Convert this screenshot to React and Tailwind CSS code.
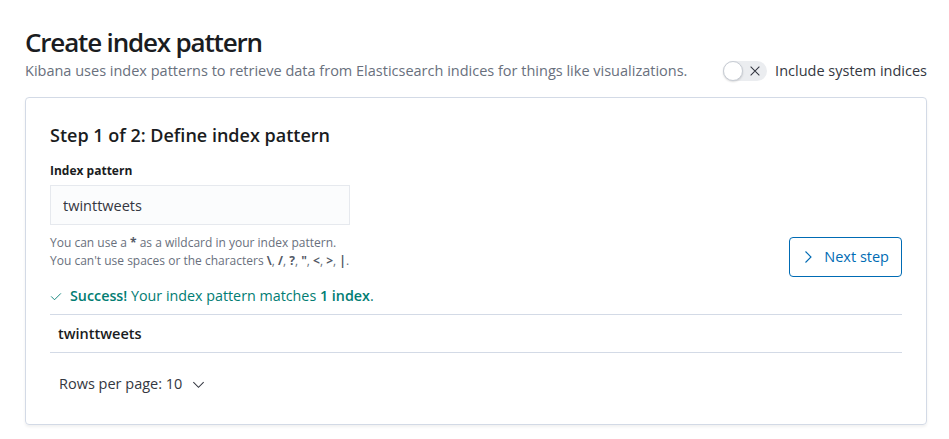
import React, { useState } from "react";

const font = { fontFamily: '"Open Sans", "Noto Sans", sans-serif' };

function ChevronRight({ className }) {
    return (
        <svg viewBox="0 0 16 16" className={className} fill="none" stroke="currentColor" strokeWidth="1.1">
            <path d="M5.5 2.5 L11 8 L5.5 13.5" />
        </svg>
    );
}

function ChevronDown({ className }) {
    return (
        <svg viewBox="0 0 16 16" className={className} fill="none" stroke="currentColor" strokeWidth="1.1">
            <path d="M2.5 5.5 L8 11 L13.5 5.5" />
        </svg>
    );
}

function Check({ className }) {
    return (
        <svg viewBox="0 0 16 16" className={className} fill="none" stroke="currentColor" strokeWidth="1.2">
            <path d="M1.5 8.5 L6 13 L14.5 4.5" />
        </svg>
    );
}

function Toggle({ on, onChange }) {
    return (
        <button
            onClick={() => onChange(!on)}
            className="relative w-[44px] h-[20px] rounded-full bg-[#ebedf0] flex items-center"
        >
            <span className="absolute left-0 top-0 w-[20px] h-[20px] rounded-full bg-white border border-[#c7ccd4] shadow-[0_1px_2px_rgba(0,0,0,0.15)]" />
            <svg viewBox="0 0 16 16" className="absolute left-[25px] top-[3px] w-[14px] h-[14px] text-[#343741]" fill="none" stroke="currentColor" strokeWidth="1.2">
                <path d="M3 3 L13 13 M13 3 L3 13" />
            </svg>
        </button>
    );
}

export default function App() {
    const [pattern, setPattern] = useState("twinttweets");
    const [system, setSystem] = useState(false);

    return (
        <div className="min-h-screen bg-white pl-[25px] pr-[22px] pt-[24px] text-[#343741]" style={font}>
            {/* Header */}
            <div className="flex justify-between items-end">
                <div>
                    <h1 className="text-[26px] leading-[36px] font-semibold tracking-[-0.045em] text-[#1a1c21]">Create index pattern</h1>
                    <p className="text-[14.5px] leading-[21px] text-[#69707d]">
                        Kibana uses index patterns to retrieve data from Elasticsearch indices for things like visualizations.
                    </p>
                </div>
                <div className="flex items-center gap-2 h-[21px]">
                    <Toggle on={system} onChange={setSystem} />
                    <span className="text-[14.5px] leading-[21px] text-[#343741]">Include system indices</span>
                </div>
            </div>

            {/* Panel */}
            <div className="mt-4 border border-[#d3dae6] rounded-[4px] shadow-[0_2px_3px_rgba(0,0,0,0.06)] px-6 pt-[25px] pb-6">
                <div className="flex justify-between items-start">
                    <div>
                        <h2 className="text-[18px] leading-[24px] font-semibold text-[#1a1c21]">Step 1 of 2: Define index pattern</h2>
                        <label className="block mt-4 text-xs leading-4 font-bold text-[#1a1c21]">Index pattern</label>
                        <input
                            value={pattern}
                            onChange={(e) => setPattern(e.target.value)}
                            className="mt-[6px] w-[300px] h-[40px] px-3 text-[14.5px] bg-[#fbfcfd] border border-[#e6e9ee] text-[#343741] focus:outline-none"
                        />
                        <div className="mt-[9px] text-xs leading-[18px] text-[#69707d]">
                            <div>You can use a <b className="text-[#535966]">*</b> as a wildcard in your index pattern.</div>
                            <div>
                                You can't use spaces or the characters <b className="text-[#535966]">\</b>, <b className="text-[#535966]">/</b>,{" "}
                                <b className="text-[#535966]">?</b>, <b className="text-[#535966]">"</b>, <b className="text-[#535966]">&lt;</b>,{" "}
                                <b className="text-[#535966]">&gt;</b>, <b className="text-[#535966]">|</b>.
                            </div>
                        </div>
                    </div>
                    <button className="mt-[114px] -mb-[7px] h-[40px] pl-[10px] pr-[12px] flex items-center gap-[8px] border border-[#006bb4] rounded-[4px] text-[#006bb4] text-[14.5px]">
                        <ChevronRight className="w-[16px] h-[16px]" />
                        <span>Next step</span>
                    </button>
                </div>

                <div className="mt-4 flex items-center gap-[8px] text-[14.3px] leading-5 text-[#017d73]">
                    <Check className="w-[12px] h-[12px]" />
                    <span>
                        <span className="font-semibold">Success!</span> Your index pattern matches <span className="font-semibold">1 index</span>.
                    </span>
                </div>

                <div className="mt-[8px] border-t border-b border-[#d3dae6]">
                    <div className="px-2 py-2 text-[14.5px] leading-[21px] font-semibold text-[#1a1c21]">twinttweets</div>
                </div>

                <button className="mt-[15px] h-[32px] px-[9px] flex items-center gap-[9px] text-[14.5px] text-[#343741]">
                    <span>Rows per page: 10</span>
                    <ChevronDown className="w-[15px] h-[15px]" />
                </button>
            </div>
        </div>
    );
}
